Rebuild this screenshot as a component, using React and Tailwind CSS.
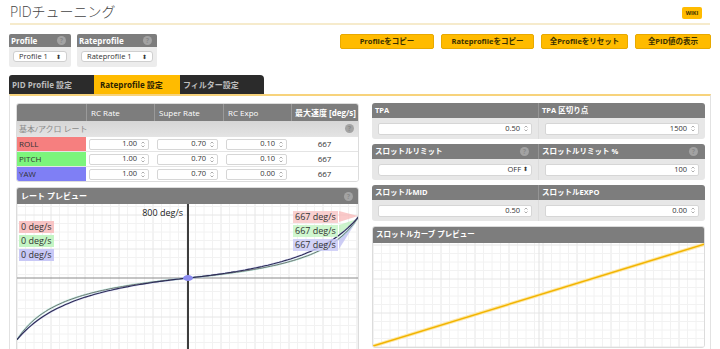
import React from 'react';

const FONT = "font-['Open_Sans','Noto_Sans_CJK_JP',sans-serif]";

function rate(f, rc, sr, ex) {
    let c = f;
    const a = Math.abs(c);
    if (ex) c = c * a * a * a * ex + c * (1 - ex);
    let r = 200 * rc * c;
    if (sr) r *= 1 / Math.min(Math.max(1 - Math.abs(c) * sr, 0.01), 1);
    return r;
}

function curvePath(w, h, rc, sr, ex) {
    const cx = w / 2;
    const cy = h / 2 + 0.5;
    const pts = [];
    for (let i = 0; i <= 120; i++) {
        const f = -1 + (2 * i) / 120;
        const r = rate(f, rc, sr, ex);
        pts.push(`${(cx + f * cx).toFixed(1)},${(cy - (r * cy) / 800).toFixed(1)}`);
    }
    return 'M' + pts.join(' L');
}

function Grid({ w, h, step = 8.5 }) {
    const lines = [];
    for (let i = 0, x = 0; x <= w; i++, x += step) {
        lines.push(<line key={'v' + i} x1={x} y1={0} x2={x} y2={h} stroke={i % 4 === 0 ? '#e6e6e6' : '#f2f2f2'} strokeWidth="1" />);
    }
    for (let i = 0, y = h; y >= 0; i++, y -= step) {
        lines.push(<line key={'h' + i} x1={0} y1={y} x2={w} y2={y} stroke={i % 4 === 0 ? '#e6e6e6' : '#f2f2f2'} strokeWidth="1" />);
    }
    return <g>{lines}</g>;
}

function Help({ className = '' }) {
    return (
        <span className={`w-[9px] h-[9px] rounded-full bg-[#a3a3a3] text-[#8a8a8a] text-[7px] leading-[9px] font-bold text-center ${className}`}>?</span>
    );
}

function Spin() {
    return (
        <svg width="4" height="7" viewBox="0 0 4 7" className="shrink-0">
            <path d="M0.5 2.5 L2 1 L3.5 2.5" fill="none" stroke="#999" strokeWidth="0.8" />
            <path d="M0.5 4.5 L2 6 L3.5 4.5" fill="none" stroke="#999" strokeWidth="0.8" />
        </svg>
    );
}

function NumInput({ value, className = '' }) {
    return (
        <div className={`h-[11px] bg-white border border-[#d6d6d6] rounded-[2px] flex items-center justify-end gap-[4px] pr-[3px] text-[7.5px] text-[#333] ${className}`}>
            <span>{value}</span>
            <Spin />
        </div>
    );
}

function Select({ label, className = '' }) {
    return (
        <div className={`h-[11px] bg-white border border-[#cfcfcf] rounded-[3px] flex items-center justify-between px-[5px] text-[7.5px] text-[#333] ${className}`}>
            <span>{label}</span>
            <span className="text-[6px] leading-none">⬍</span>
        </div>
    );
}

function ProfileBox({ title, value, w }) {
    return (
        <div className={`${w} rounded-[2px] overflow-hidden bg-[#ececec]`}>
            <div className="h-[13px] bg-[#7d7d7d] flex items-center justify-between px-[2px] text-[8px] font-bold text-white">
                <span>{title}</span>
                <Help className="mr-[3px]" />
            </div>
            <div className="px-[4px] pt-[4px] pb-[5px]">
                <Select label={value} />
            </div>
        </div>
    );
}

function Btn({ children, w }) {
    return (
        <div className={`${w} h-[15px] rounded-[2px] bg-[#ffbb00] border border-[#e8a900] flex items-center justify-center text-[7.5px] font-bold text-[#3a3000]`}>
            {children}
        </div>
    );
}

const rows = [
    { name: 'ROLL', bg: 'bg-[#f67f7f]', rc: '1.00', sr: '0.70', ex: '0.10' },
    { name: 'PITCH', bg: 'bg-[#7cf57c]', rc: '1.00', sr: '0.70', ex: '0.10' },
    { name: 'YAW', bg: 'bg-[#7f7ff5]', rc: '1.00', sr: '0.70', ex: '0.00' },
];

function RateTable() {
    const head = 'h-[17px] flex items-center px-[4px] border-l border-[#9a9a9a] text-white text-[8px] whitespace-nowrap';
    return (
        <div className="rounded-[3px] overflow-hidden border border-[#dcdcdc]">
            <div className="grid grid-cols-[69px_68px_69px_68px_1fr] bg-[#7d7d7d]">
                <div className="h-[17px]" />
                <div className={head}>RC Rate</div>
                <div className={head}>Super Rate</div>
                <div className={head}>RC Expo</div>
                <div className={`${head} font-bold text-[7.5px] !px-[3px]`}>最大速度 [deg/s]</div>
            </div>
            <div className="h-[15px] bg-gradient-to-b from-[#d6d6d6] to-[#e3e3e3] flex items-center justify-between px-[2px] text-[8px] text-[#8a8a8a]">
                <span>基本/アクロ レート</span>
                <Help className="mr-[2px]" />
            </div>
            {rows.map(r => (
                <div key={r.name} className="grid grid-cols-[69px_68px_69px_68px_1fr] h-[15px] border-t border-[#e4e4e4] bg-white">
                    <div className={`${r.bg} flex items-center px-[2px] text-[8px] text-[#333]`}>{r.name}</div>
                    <div className="flex items-center px-[3px]"><NumInput value={r.rc} className="w-[60px]" /></div>
                    <div className="flex items-center px-[3px]"><NumInput value={r.sr} className="w-[61px]" /></div>
                    <div className="flex items-center px-[3px]"><NumInput value={r.ex} className="w-[61px]" /></div>
                    <div className="flex items-center justify-center text-[8px] text-[#333]">667</div>
                </div>
            ))}
        </div>
    );
}

function RatePreview() {
    const w = 342;
    const h = 147;
    const cx = w / 2;
    const cy = h / 2 + 0.5;
    const roll = curvePath(w, h, 1, 0.7, 0.1);
    const yaw = curvePath(w, h, 1, 0.7, 0);
    const lab = 'h-[12px] flex items-center px-[2px] text-[9px] text-[#333] w-fit';
    return (
        <div className="rounded-[3px] overflow-hidden border border-[#dcdcdc]">
            <div className="h-[16px] bg-[#7d7d7d] flex items-center justify-between px-[4px] text-[8px] font-bold text-white">
                <span>レート プレビュー</span>
                <Help className="mr-[1px]" />
            </div>
            <div className="relative h-[147px] bg-white">
                <svg width={w} height={h} className="absolute left-0 top-0">
                    <Grid w={w} h={h} />
                    <line x1={0} y1={cy} x2={w} y2={cy} stroke="#8a8a8a" strokeWidth="1" />
                    <line x1={cx} y1={0} x2={cx} y2={h} stroke="#3d3d3d" strokeWidth="2" />
                    <polygon points="322,7 322,18 341,12" fill="#f8b8b8" opacity="0.75" />
                    <polygon points="322,21 322,32 340,15" fill="#b8f0b8" opacity="0.7" />
                    <polygon points="322,34 322,45 339,18" fill="#c0c0f3" opacity="0.8" />
                    <path d={roll} fill="none" stroke="#9ee6d2" strokeWidth="2" opacity="0.6" />
                    <path d={yaw} fill="none" stroke="#b0b0ea" strokeWidth="2" opacity="0.5" />
                    <path d={roll} fill="none" stroke="#666" strokeWidth="0.9" />
                    <path d={yaw} fill="none" stroke="#2c2c55" strokeWidth="1.1" />
                    <ellipse cx={cx} cy={cy} rx="5" ry="3" fill="#8b8bee" />
                </svg>
                <div className="absolute right-[175px] top-[2px] text-[9px] text-[#222]">800 deg/s</div>
                <div className="absolute left-[2px] top-[17px] flex flex-col gap-[2px]">
                    <div className={`${lab} bg-[#f8c4c4]`}>0 deg/s</div>
                    <div className={`${lab} bg-[#c4f5c4]`}>0 deg/s</div>
                    <div className={`${lab} bg-[#c8c8f6]`}>0 deg/s</div>
                </div>
                <div className="absolute left-[276px] top-[7px] flex flex-col gap-[2px]">
                    <div className={`${lab} bg-[#f8c4c4]/80`}>667 deg/s</div>
                    <div className={`${lab} bg-[#c4f5c4]/80`}>667 deg/s</div>
                    <div className={`${lab} bg-[#c8c8f6]/80`}>667 deg/s</div>
                </div>
            </div>
        </div>
    );
}

function PairPanel({ left, right, leftVal, rightVal, leftHelp, rightHelp, select }) {
    const headCell = 'h-[15px] flex items-center justify-between px-[3px] text-[7.5px] font-bold text-white';
    return (
        <div className="rounded-[3px] overflow-hidden">
            <div className="grid grid-cols-[166px_1fr] bg-[#7d7d7d]">
                <div className={headCell}><span>{left}</span>{leftHelp && <Help className="mr-[6px]" />}</div>
                <div className={`${headCell} border-l border-[#959595]`}><span>{right}</span>{rightHelp && <Help className="mr-[4px]" />}</div>
            </div>
            <div className="grid grid-cols-[166px_1fr] bg-[#e7e7e7] h-[21px]">
                <div className="flex items-center px-[6px]">
                    {select ? (
                        <div className="w-full h-[12px] bg-white border border-[#d6d6d6] rounded-[3px] flex items-center justify-end gap-[2px] pr-[3px] text-[7.5px] text-[#333]">
                            <span>{leftVal}</span><span className="text-[6px]">⬍</span>
                        </div>
                    ) : (
                        <NumInput value={leftVal} className="w-full h-[12px]" />
                    )}
                </div>
                <div className="flex items-center px-[6px] border-l border-[#dcdcdc]">
                    <NumInput value={rightVal} className="w-full h-[12px]" />
                </div>
            </div>
        </div>
    );
}

function ThrottlePreview() {
    const w = 332;
    const h = 104;
    return (
        <div className="rounded-[3px] overflow-hidden border border-[#dcdcdc]">
            <div className="h-[16px] bg-[#7d7d7d] flex items-center px-[3px] text-[7.5px] font-bold text-white">
                スロットルカーブ プレビュー
            </div>
            <svg width={w} height={h} className="block bg-white">
                <Grid w={w} h={h} />
                <line x1={166} y1={0} x2={166} y2={h} stroke="#e2e2e2" strokeWidth="1" />
                <line x1={0} y1={h - 1} x2={w} y2={1} stroke="#fde7a6" strokeWidth="3.5" />
                <line x1={0} y1={h - 1} x2={w} y2={1} stroke="#f2b400" strokeWidth="1.5" />
            </svg>
        </div>
    );
}

export default function App() {
    return (
        <div className={`w-[720px] h-[349px] overflow-hidden bg-white ${FONT}`}>
            <div className="mx-[10px] h-[25px] flex items-start justify-between border-b-2 border-[#f6ebcc]">
                <div className="text-[14px] font-light text-[#444] mt-[3px] leading-[18px]">PIDチューニング</div>
                <div className="mt-[7px] mr-[8px] w-[20px] h-[12px] rounded-[2px] bg-[#ffbb00] flex items-center justify-center text-[5.5px] font-bold text-[#3a3000]">WIKI</div>
            </div>

            <div className="flex items-start ml-[9px] mr-[9px] mt-[9px]">
                <ProfileBox title="Profile" value="Profile 1" w="w-[62px]" />
                <div className="w-[6px]" />
                <ProfileBox title="Rateprofile" value="Rateprofile 1" w="w-[80px]" />
                <div className="flex-1" />
                <div className="flex gap-[7px]">
                    <Btn w="w-[94px]">Profileをコピー</Btn>
                    <Btn w="w-[93px]">Rateprofileをコピー</Btn>
                    <Btn w="w-[87px]">全Profileをリセット</Btn>
                    <Btn w="w-[76px]">全PID値の表示</Btn>
                </div>
            </div>

            <div className="flex ml-[9px] mt-[8px] h-[19px] text-[8px] font-bold">
                <div className="w-[85px] bg-[#2b2b2b] text-[#bdbdbd] rounded-tl-[3px] flex items-center px-[3px]">PID Profile 設定</div>
                <div className="w-[86px] bg-[#ffbb00] text-[#2b2200] flex items-center px-[6px]">Rateprofile 設定</div>
                <div className="w-[84px] bg-[#2b2b2b] text-[#bdbdbd] rounded-tr-[4px] flex items-center px-[3px]">フィルター設定</div>
            </div>

            <div className="mx-[9px] h-[260px] border-t-2 border-x border-t-[#f7d37c] border-x-[#e2e2e2] flex pl-[6px] pt-[7px] gap-[13px]">
                <div className="w-[343px] flex flex-col gap-[5px]">
                    <RateTable />
                    <RatePreview />
                </div>
                <div className="w-[333px] flex flex-col gap-[5px]">
                    <PairPanel left="TPA" right="TPA 区切り点" leftVal="0.50" rightVal="1500" />
                    <PairPanel left="スロットルリミット" right="スロットルリミット %" leftVal="OFF" rightVal="100" leftHelp rightHelp select />
                    <PairPanel left="スロットルMID" right="スロットルEXPO" leftVal="0.50" rightVal="0.00" />
                    <ThrottlePreview />
                </div>
            </div>
        </div>
    );
}
